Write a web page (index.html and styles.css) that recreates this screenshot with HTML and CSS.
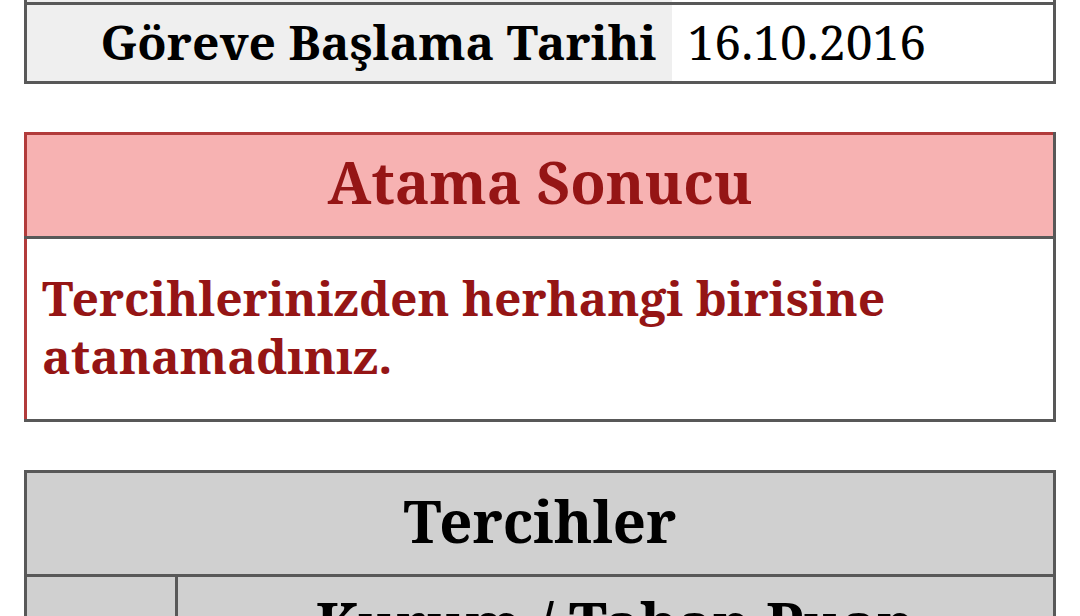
FILE: index.html
```html
<!DOCTYPE html>
<html lang="tr">
<head>
    <meta charset="UTF-8">
    <meta name="viewport" content="width=device-width, initial-scale=1.0">
    <title>Atama Sonucu</title>
    <link rel="stylesheet" href="styles.css">
</head>
<body>
    <div class="page">
        <table class="info-table">
            <colgroup>
                <col class="label-col">
                <col>
            </colgroup>
            <tr class="prev-row">
                <th></th>
                <td></td>
            </tr>
            <tr>
                <th>Göreve Başlama Tarihi</th>
                <td>16.10.2016</td>
            </tr>
        </table>

        <table class="result-table">
            <tr>
                <th>Atama Sonucu</th>
            </tr>
            <tr>
                <td>Tercihlerinizden herhangi birisine atanamadınız.</td>
            </tr>
        </table>

        <table class="pref-table">
            <colgroup>
                <col class="no-col">
                <col>
            </colgroup>
            <tr>
                <th colspan="2" class="pref-title">Tercihler</th>
            </tr>
            <tr>
                <th></th>
                <th class="pref-head">Kurum / Taban Puan</th>
            </tr>
        </table>
    </div>
</body>
</html>
```

FILE: styles.css
```css
* {
    margin: 0;
    padding: 0;
    box-sizing: border-box;
}

body {
    background-color: #ffffff;
    font-family: "Noto Serif", "DejaVu Serif", serif;
    font-size: 48px;
    color: #000;
}

.page {
    padding: 0 24px;
}

table {
    width: 100%;
    border-collapse: collapse;
    table-layout: fixed;
}

/* üst bilgi tablosu */
.info-table {
    border: 3px solid #585858;
    border-top: none;
}

.info-table .label-col {
    width: 646px;
}

.info-table th {
    background-color: #efefef;
    text-align: right;
    font-weight: bold;
    padding: 0 15px 2px;
    height: 79px;
    white-space: nowrap;
}

.info-table td {
    text-align: left;
    font-weight: normal;
    padding: 0 16px 2px;
}

.info-table .prev-row th,
.info-table .prev-row td {
    height: 3px;
    padding: 0;
}

.info-table .prev-row {
    border-bottom: 3px solid #585858;
}

/* atama sonucu kutusu */
.result-table {
    margin-top: 48px;
    border-top: 3px solid #b23b3b;
    border-left: 3px solid #b23b3b;
    border-right: 3px solid #585858;
    border-bottom: 3px solid #585858;
}

.result-table th {
    background-color: #f7b2b2;
    color: #951515;
    font-size: 58px;
    font-weight: bold;
    height: 104px;
    padding-bottom: 7px;
    text-align: center;
    border-bottom: 3px solid #585858;
}

.result-table td {
    color: #951515;
    font-weight: bold;
    padding: 30px 15px 30px 15px;
    line-height: 58px;
    height: 183px;
    vertical-align: top;
}

/* tercihler tablosu */
.pref-table {
    margin-top: 48px;
    border: 3px solid #585858;
    background-color: #d0d0d0;
}

.pref-table .no-col {
    width: 151px;
}

.pref-title {
    font-size: 58px;
    font-weight: bold;
    height: 104px;
    padding-bottom: 6px;
    text-align: center;
}

.pref-table th {
    border: 3px solid #585858;
}

.pref-head {
    font-size: 58px;
    font-weight: bold;
    text-align: center;
    padding-top: 6px;
    vertical-align: top;
    height: 120px;
}
```
